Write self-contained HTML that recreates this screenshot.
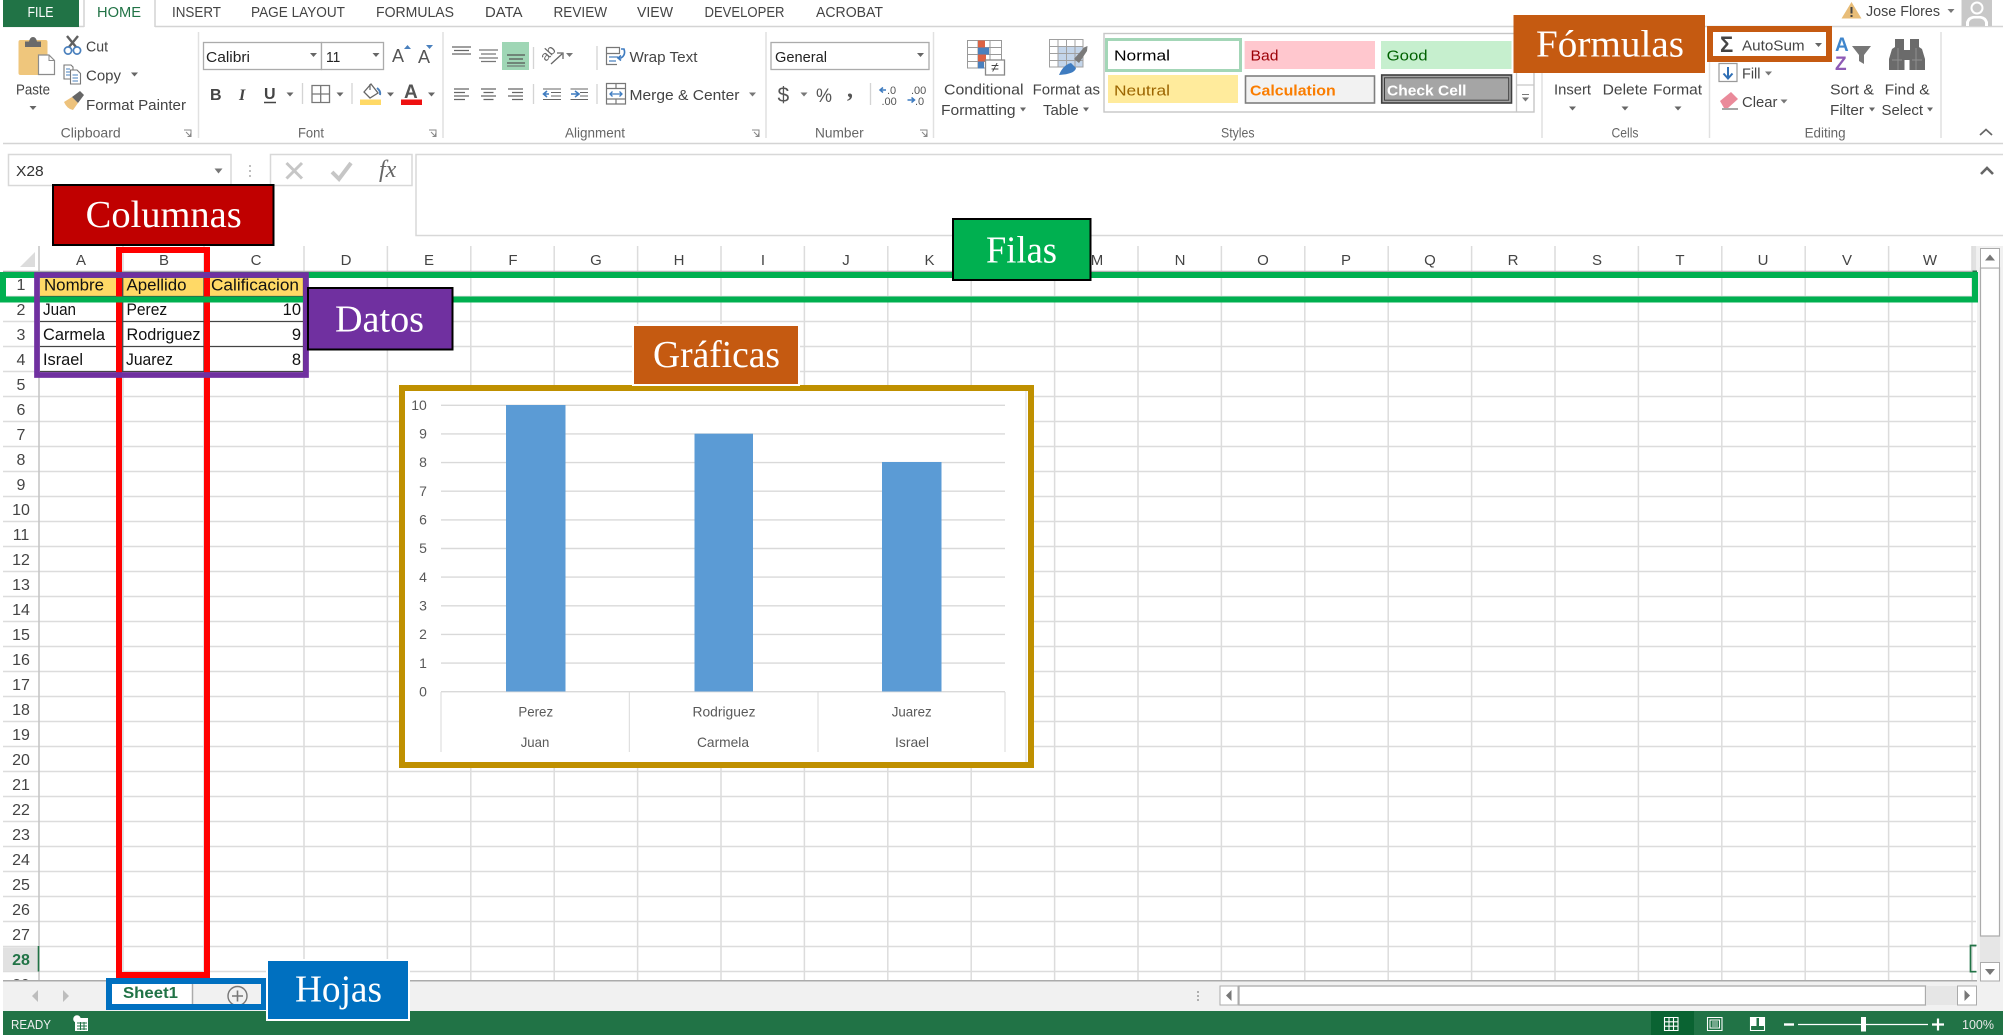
<!DOCTYPE html>
<html lang="es">
<head>
<meta charset="utf-8">
<title>Excel</title>
<style>
html,body{margin:0;padding:0;background:#fff;width:2003px;height:1035px;overflow:hidden}
svg{display:block;position:absolute;left:0;top:0;filter:blur(.3px)}
text{font-family:"Liberation Sans",sans-serif;fill:#444;font-size:15px}
.t{font-size:15px;fill:#444}
.g{font-size:14px;fill:#666}
.tab{font-size:15px;fill:#444}
.s{font-family:"Liberation Serif",serif;font-size:38px;fill:#fff}
.c{font-size:16.5px;fill:#111}
.cr{font-size:16.5px;fill:#111;text-anchor:end}
.rn{font-size:16px;fill:#444;text-anchor:middle}
.cl{font-size:15px;fill:#444;text-anchor:middle}
.ax{font-size:14px;fill:#595959;text-anchor:middle}
.ct{font-size:14px;fill:#595959}
</style>
</head>
<body>
<svg width="2003" height="1035" viewBox="0 0 2003 1035" xmlns="http://www.w3.org/2000/svg">
<rect width="2003" height="1035" fill="#fff"/>

<!-- tabs -->
<path d="M3 26.5H84M155 26.5H2003" stroke="#d4d4d4" stroke-width="1.5" fill="none"/>
<rect x="3" y="0" width="76" height="27" fill="#217346"/>
<path d="M84 27V0M155 27V0" stroke="#d4d4d4" stroke-width="1.5" fill="none"/>
<text x="27.5" y="17" style="fill:#fff;font-size:15px" textLength="26" lengthAdjust="spacingAndGlyphs">FILE</text>
<text x="97" y="17" style="fill:#217346" class="tab" textLength="44" lengthAdjust="spacingAndGlyphs">HOME</text>
<text x="172" y="17" class="tab" textLength="49" lengthAdjust="spacingAndGlyphs">INSERT</text>
<text x="251" y="17" class="tab" textLength="94" lengthAdjust="spacingAndGlyphs">PAGE LAYOUT</text>
<text x="376" y="17" class="tab" textLength="78" lengthAdjust="spacingAndGlyphs">FORMULAS</text>
<text x="485" y="17" class="tab" textLength="37.5" lengthAdjust="spacingAndGlyphs">DATA</text>
<text x="553.5" y="17" class="tab" textLength="53.6" lengthAdjust="spacingAndGlyphs">REVIEW</text>
<text x="637" y="17" class="tab" textLength="36" lengthAdjust="spacingAndGlyphs">VIEW</text>
<text x="704.5" y="17" class="tab" textLength="80" lengthAdjust="spacingAndGlyphs">DEVELOPER</text>
<text x="816" y="17" class="tab" textLength="67" lengthAdjust="spacingAndGlyphs">ACROBAT</text>

<!-- user -->
<path d="M1851.5 2L1861.5 18.5H1841.5Z" fill="#e8bd78"/>
<path d="M1851.5 7V13.5M1851.5 15V17" stroke="#444" stroke-width="2" fill="none"/>
<text x="1866" y="16" class="t" textLength="74" lengthAdjust="spacingAndGlyphs">Jose Flores</text>
<path d="M1947.5 9h7l-3.5 4z" fill="#777"/>
<rect x="1961.5" y="0" width="30.5" height="26" fill="#c8c8c8"/>
<circle cx="1977" cy="8" r="6.5" fill="#fff"/>
<path d="M1966 26V22Q1968 16.5 1973 16H1981Q1986 16.5 1988 22V26Z" fill="#fff"/>
<circle cx="1977" cy="8" r="4.5" fill="#c8c8c8"/>
<path d="M1969 26V22.5Q1970 19 1974 18.5H1980Q1984 19 1985 22.5V26Z" fill="#c8c8c8"/>

<!-- ribbon bottom & seps -->
<path d="M3 143.5H2003" stroke="#d4d4d4" stroke-width="1.5"/>
<path d="M198.5 32V138M443 32V138M766 32V138M933.5 32V138M1542 32V138M1709.5 32V138M1941 32V138" stroke="#e1e1e1" stroke-width="1.5"/>

<!-- clipboard -->
<rect x="18.5" y="40" width="29" height="35" rx="2" fill="#efc67c"/>
<path d="M25 47V41.5H29Q30 37 33 37T37 41.5H41V47Z" fill="#6a6a6a"/>
<path d="M38.5 55H49L54.5 60.5V74.5H38.5Z" fill="#fff" stroke="#8c8c8c" stroke-width="1.2"/>
<path d="M49 55V60.5H54.5" fill="none" stroke="#8c8c8c" stroke-width="1"/>
<text x="16" y="94.5" class="t" textLength="34" lengthAdjust="spacingAndGlyphs">Paste</text>
<path d="M29.5 106h7l-3.5 4z" fill="#666"/>
<path d="M67 36L76 47M78 36L69 47" stroke="#606060" stroke-width="2.4" fill="none"/>
<circle cx="68" cy="50.5" r="3.6" fill="#fff" stroke="#4a80bd" stroke-width="1.7"/>
<circle cx="77" cy="50.5" r="3.6" fill="#fff" stroke="#4a80bd" stroke-width="1.7"/>
<text x="86" y="51.5" class="t" textLength="22" lengthAdjust="spacingAndGlyphs">Cut</text>
<path d="M64 65H71L73 67V79H64Z" fill="#fff" stroke="#777" stroke-width="1.1"/>
<path d="M70.5 70H77L80.5 73.5V84H70.5Z" fill="#fff" stroke="#777" stroke-width="1.1"/>
<path d="M66 69H70M66 72H70M66 75H70M72.5 75H78M72.5 78H78M72.5 81H78" stroke="#4a80bd" stroke-width="1.1"/>
<text x="86" y="80.5" class="t" textLength="35" lengthAdjust="spacingAndGlyphs">Copy</text>
<path d="M131 72.5h7l-3.5 4z" fill="#666"/>
<path d="M64 102L72 97L78 103L73 110Q67 109 64 102Z" fill="#edc27c"/>
<path d="M72 97L80 91L84 95L78 103Z" fill="#666"/>
<text x="86" y="110" class="t" textLength="100" lengthAdjust="spacingAndGlyphs">Format Painter</text>
<text x="60.7" y="137.5" class="g" textLength="60" lengthAdjust="spacingAndGlyphs">Clipboard</text>
<path d="M184 130H191V137M186 132L190 136M187.5 136.5H190.5V133.5" stroke="#888" stroke-width="1" fill="none"/>

<!-- font -->
<rect x="203.5" y="42.5" width="118" height="27" fill="#fff" stroke="#ababab" stroke-width="1.3"/>
<rect x="321.5" y="42.5" width="62" height="27" fill="#fff" stroke="#ababab" stroke-width="1.3"/>
<text x="206" y="62" class="t" style="fill:#222" textLength="44" lengthAdjust="spacingAndGlyphs">Calibri</text>
<text x="326" y="62" class="t" style="fill:#222" textLength="14.3" lengthAdjust="spacingAndGlyphs">11</text>
<path d="M310 53h7l-3.5 4zM372.5 53h7l-3.5 4z" fill="#666"/>
<text x="392" y="62" style="font-size:18px;fill:#555">A</text>
<path d="M404 49h7l-3.5-4z" fill="#4a80bd"/>
<text x="418" y="63" style="font-size:18px;fill:#555">A</text>
<path d="M426 45h7l-3.5 4z" fill="#4a80bd"/>
<text x="210" y="100" style="font-size:16px;font-weight:bold;fill:#444">B</text>
<text x="239" y="100" style="font-size:16px;font-style:italic;font-weight:bold;font-family:'Liberation Serif',serif;fill:#444">I</text>
<text x="264" y="99" style="font-size:16px;font-weight:bold;fill:#444">U</text>
<path d="M264 102.5H276" stroke="#444" stroke-width="1.5"/>
<path d="M286.5 92.5h7l-3.5 4z" fill="#666"/>
<path d="M302.5 83V104" stroke="#d4d4d4" stroke-width="1.3"/>
<path d="M312 85.5H329.5V102.5H312ZM320.7 85.5V102.5M312 94H329.5" stroke="#777" stroke-width="1.3" fill="none"/>
<path d="M336.5 92.5h7l-3.5 4z" fill="#666"/>
<path d="M352 83V104" stroke="#d4d4d4" stroke-width="1.3"/>
<path d="M364 92L371 84L378 93L370 98Z" fill="#fff" stroke="#666" stroke-width="1.3"/>
<path d="M370 84V90" stroke="#666" stroke-width="1.2"/>
<path d="M377 88Q381 91 380 95" stroke="#4a80bd" stroke-width="2" fill="none"/>
<rect x="360" y="99.5" width="21" height="5.5" fill="#ffd966"/>
<path d="M387 92.5h7l-3.5 4z" fill="#666"/>
<text x="404" y="98" style="font-size:19px;font-weight:bold;fill:#555">A</text>
<rect x="401" y="99.5" width="21" height="5.5" fill="#ee1111"/>
<path d="M428 92.5h7l-3.5 4z" fill="#666"/>
<text x="298" y="137.5" class="g" textLength="26" lengthAdjust="spacingAndGlyphs">Font</text>
<path d="M429 130H436V137M431 132L435 136M432.5 136.5H435.5V133.5" stroke="#888" stroke-width="1" fill="none"/>

<!-- alignment -->
<rect x="502" y="42" width="27" height="28" fill="#9fd6b5"/>
<path d="M452 47H471M454 50.5H469M452 54H471" stroke="#666" stroke-width="1.2"/>
<path d="M479 50H498M481 54H496M479 58H498M481 61.5H496" stroke="#777" stroke-width="1.2"/>
<path d="M507 55H525M509 59H523M507 63H525" stroke="#555" stroke-width="1.3"/>
<path d="M507 66H525" stroke="#666" stroke-width="1"/>
<path d="M533.5 47V69M533.5 84V104M597 46V70M597 84V104" stroke="#d4d4d4" stroke-width="1.3"/>
<text transform="translate(546 62) rotate(-48)" style="font-size:14px;fill:#666">ab</text>
<path d="M551 64L562 54M557 53H563V59" stroke="#666" stroke-width="1.3" fill="none"/>
<path d="M566 53h7l-3.5 4z" fill="#777"/>
<path d="M606.5 47.5H619.5V53.5H606.5ZM606.5 53.5V64.5H617" stroke="#777" stroke-width="1.2" fill="none"/>
<path d="M609 57H618M609 61H616" stroke="#4a80bd" stroke-width="1.3"/>
<path d="M621 49H624Q626 55 621 58H618M621 55.5L618 58L621 60.5" stroke="#3f7cc0" stroke-width="1.6" fill="none"/>
<text x="629.5" y="62" class="t" textLength="68" lengthAdjust="spacingAndGlyphs">Wrap Text</text>
<path d="M454 89H469M454 92.5H465M454 96H469M454 99.5H465M481 89H496M483.5 92.5H493.5M481 96H496M483.5 99.5H493.5M508 89H523M512 92.5H523M508 96H523M512 99.5H523" stroke="#666" stroke-width="1.2"/>
<path d="M551 92.5H561M551 96H561M543 99.5H561M543 89H561" stroke="#666" stroke-width="1.1"/>
<path d="M549 94H544M547 91L543.5 94L547 97" stroke="#3f7cc0" stroke-width="1.6" fill="none"/>
<path d="M570.5 89H588M580 92.5H588M580 96H588M570.5 99.5H588" stroke="#666" stroke-width="1.1"/>
<path d="M571 94H578M575 91L579 94L575 97" stroke="#3f7cc0" stroke-width="1.6" fill="none"/>
<path d="M606.5 83.5H625.5V104H606.5ZM606.5 88.5H625.5M606.5 99H625.5M616 83.5V88.5M616 99V104" stroke="#777" stroke-width="1.2" fill="none"/>
<path d="M610 94H622M612.5 91.5L610 94L612.5 96.5M619.5 91.5L622 94L619.5 96.5" stroke="#3f7cc0" stroke-width="1.3" fill="none"/>
<text x="629.5" y="100" class="t" textLength="110" lengthAdjust="spacingAndGlyphs">Merge &amp; Center</text>
<path d="M749 92.5h7l-3.5 4z" fill="#777"/>
<text x="565" y="137.5" class="g" textLength="60" lengthAdjust="spacingAndGlyphs">Alignment</text>
<path d="M752 130H759V137M754 132L758 136M755.5 136.5H758.5V133.5" stroke="#888" stroke-width="1" fill="none"/>

<!-- number -->
<rect x="771" y="42.5" width="158" height="27" fill="#fff" stroke="#ababab" stroke-width="1.3"/>
<text x="775" y="62" class="t" style="fill:#222" textLength="52" lengthAdjust="spacingAndGlyphs">General</text>
<path d="M917 53h7l-3.5 4z" fill="#666"/>
<text x="777.5" y="102" style="font-size:21px;fill:#555">$</text>
<path d="M800.5 92.5h7l-3.5 4z" fill="#777"/>
<text x="816" y="102" style="font-size:19px;fill:#555" textLength="16" lengthAdjust="spacingAndGlyphs">%</text>
<text x="847" y="97" style="font-size:24px;font-weight:bold;fill:#555;font-family:'Liberation Serif',serif">,</text>
<path d="M870.5 83V105" stroke="#d4d4d4" stroke-width="1.3"/>
<path d="M886 90H880M883 87.5L880 90L883 92.5" stroke="#3f7cc0" stroke-width="1.5" fill="none"/>
<text x="887" y="94" style="font-size:11px;fill:#555">.0</text>
<text x="881.5" y="105" style="font-size:11px;fill:#555">.00</text>
<text x="911" y="94" style="font-size:11px;fill:#555">.00</text>
<path d="M907.5 100H914M911.5 97.5L914.5 100L911.5 102.5" stroke="#3f7cc0" stroke-width="1.5" fill="none"/>
<text x="915" y="105" style="font-size:11px;fill:#555">.0</text>
<text x="815" y="137.5" class="g" textLength="48.7" lengthAdjust="spacingAndGlyphs">Number</text>
<path d="M920 130H927V137M922 132L926 136M923.5 136.5H926.5V133.5" stroke="#888" stroke-width="1" fill="none"/>

<!-- conditional formatting -->
<path d="M967.5 40.5H1001.5V68H967.5ZM967.5 47.5H1001.5M967.5 54.5H1001.5M967.5 61.5H1001.5M978 40.5V68M990 40.5V68" stroke="#999" stroke-width="1" fill="#fff"/>
<rect x="978" y="40.5" width="7" height="7" fill="#dc6243"/>
<rect x="978" y="47.5" width="11" height="7" fill="#4a80bd"/>
<rect x="978" y="54.5" width="8" height="7" fill="#dc6243"/>
<rect x="978" y="61.5" width="6" height="7" fill="#4a80bd"/>
<rect x="985.5" y="60" width="19" height="15" fill="#fff" stroke="#888" stroke-width="1.3"/>
<text x="995" y="72" style="font-size:14px;fill:#444;text-anchor:middle">≠</text>
<text x="944" y="94.5" class="t" textLength="79.5" lengthAdjust="spacingAndGlyphs">Conditional</text>
<text x="941" y="115" class="t" textLength="74.6" lengthAdjust="spacingAndGlyphs">Formatting</text>
<path d="M1020 107.5h6l-3 4z" fill="#666"/>
<!-- format as table -->
<rect x="1058" y="46" width="25" height="21" fill="#c3d5ea"/>
<path d="M1049.5 39.5H1083V67H1049.5ZM1049.5 46.5H1083M1049.5 53.5H1083M1049.5 60.5H1083M1058 39.5V67M1066.5 39.5V67M1075 39.5V67" stroke="#a0a0a0" stroke-width="1" fill="none"/>
<path d="M1074 59L1084 47.5L1087.5 46L1087 51L1079 63Z" fill="#7a7a7a"/>
<path d="M1059 75Q1063 65 1071 63L1076 68Q1075 74 1059 75Z" fill="#3f7cc0"/>
<text x="1032.6" y="94.5" class="t" textLength="67.4" lengthAdjust="spacingAndGlyphs">Format as</text>
<text x="1043" y="115" class="t" textLength="35.7" lengthAdjust="spacingAndGlyphs">Table</text>
<path d="M1083 107.5h6l-3 4z" fill="#666"/>

<!-- styles -->
<rect x="1104" y="33.5" width="430" height="78.5" fill="#fff" stroke="#c6c6c6" stroke-width="1.4"/>
<rect x="1106.5" y="39.5" width="134" height="31" fill="#fff" stroke="#a3d6b7" stroke-width="3"/>
<rect x="1244.6" y="41" width="130.4" height="28" fill="#ffc7ce"/>
<rect x="1381" y="41" width="130.5" height="28" fill="#c6efce"/>
<rect x="1108" y="75" width="130" height="28" fill="#ffeb9c"/>
<rect x="1245.5" y="76" width="129" height="27" fill="#f2f2f2" stroke="#7f7f7f" stroke-width="1.6"/>
<rect x="1381.7" y="75" width="129.8" height="28" fill="#a5a5a5" stroke="#3f3f3f" stroke-width="1.6"/>
<rect x="1384.5" y="77.8" width="124.2" height="22.4" fill="none" stroke="#3f3f3f" stroke-width="1"/>
<text x="1114" y="60.7" class="t" style="fill:#000" textLength="56" lengthAdjust="spacingAndGlyphs">Normal</text>
<text x="1250.5" y="60.7" class="t" style="fill:#9c0006" textLength="28" lengthAdjust="spacingAndGlyphs">Bad</text>
<text x="1386.6" y="60.7" class="t" style="fill:#006100" textLength="41" lengthAdjust="spacingAndGlyphs">Good</text>
<text x="1114" y="95.3" class="t" style="fill:#9c6500" textLength="56" lengthAdjust="spacingAndGlyphs">Neutral</text>
<text x="1250" y="95.3" class="t" style="fill:#fa7d00;font-weight:bold" textLength="85.7" lengthAdjust="spacingAndGlyphs">Calculation</text>
<text x="1387" y="95.3" class="t" style="fill:#fff;font-weight:bold" textLength="79.5" lengthAdjust="spacingAndGlyphs">Check Cell</text>
<path d="M1516.5 85H1534M1516.5 33.5V112" stroke="#c6c6c6" stroke-width="1.3" fill="none"/>
<path d="M1522 94.5H1529" stroke="#777" stroke-width="1"/>
<path d="M1522 97.5h7l-3.5 4z" fill="#777"/>
<text x="1221" y="137.5" class="g" textLength="33.5" lengthAdjust="spacingAndGlyphs">Styles</text>

<!-- cells -->
<text x="1554" y="94.5" class="t" textLength="37" lengthAdjust="spacingAndGlyphs">Insert</text>
<text x="1602.7" y="94.5" class="t" textLength="45" lengthAdjust="spacingAndGlyphs">Delete</text>
<text x="1653" y="94.5" class="t" textLength="49" lengthAdjust="spacingAndGlyphs">Format</text>
<path d="M1569 106.5h7l-3.5 4zM1621.5 106.5h7l-3.5 4zM1674.5 106.5h7l-3.5 4z" fill="#666"/>
<text x="1611.5" y="137.5" class="g" textLength="27" lengthAdjust="spacingAndGlyphs">Cells</text>

<!-- editing -->
<path d="M1719 63.5H1737V81.5H1719Z" fill="#fff" stroke="#999" stroke-width="1.2"/>
<path d="M1728 67V78M1723.5 73.5L1728 78.5L1732.5 73.5" stroke="#2f6fb5" stroke-width="2" fill="none"/>
<text x="1742" y="78.5" class="t" textLength="18.5" lengthAdjust="spacingAndGlyphs">Fill</text>
<path d="M1765 71.5h7l-3.5 4z" fill="#777"/>
<path d="M1720 101L1731 92L1738 99L1728 108H1724Z" fill="#ea8a9a"/>
<path d="M1722 109H1738" stroke="#777" stroke-width="1.3"/>
<text x="1742" y="107" class="t" textLength="35.4" lengthAdjust="spacingAndGlyphs">Clear</text>
<path d="M1780.5 99.5h7l-3.5 4z" fill="#777"/>
<text x="1835" y="51" style="font-size:19px;font-weight:bold;fill:#3f86cc">A</text>
<text x="1835" y="70" style="font-size:19px;font-weight:bold;fill:#8e5ab5">Z</text>
<path d="M1852 46H1871L1864 55V64L1859 61V55Z" fill="#777"/>
<text x="1830" y="94.5" class="t" textLength="44" lengthAdjust="spacingAndGlyphs">Sort &amp;</text>
<text x="1830" y="115" class="t" textLength="34" lengthAdjust="spacingAndGlyphs">Filter</text>
<path d="M1869 107.5h6l-3 4z" fill="#666"/>
<path d="M1895 39H1904V50H1910V39H1919V47L1922 49L1925 59V70H1909.5V60H1904.5V70H1889V59L1892 49L1895 47Z" fill="#6b6b6b"/>
<path d="M1898 48V70M1916 48V70M1892 60H1902M1912 60H1922" stroke="#8f8f8f" stroke-width="1"/>
<path d="M1889 56V50" stroke="#fff" stroke-width="0"/>
<text x="1884.6" y="94.5" class="t" textLength="45" lengthAdjust="spacingAndGlyphs">Find &amp;</text>
<text x="1881.5" y="115" class="t" textLength="41.5" lengthAdjust="spacingAndGlyphs">Select</text>
<path d="M1927 107.5h6l-3 4z" fill="#666"/>
<text x="1804.6" y="137.5" class="g" textLength="41" lengthAdjust="spacingAndGlyphs">Editing</text>
<path d="M1980 135L1986 129.5L1992 135" stroke="#666" stroke-width="1.7" fill="none"/>

<!-- formula bar -->
<rect x="8.5" y="154.5" width="222.5" height="31" fill="#fff" stroke="#d8d8d8" stroke-width="1.5"/>
<text x="16" y="176" class="t" style="fill:#333" textLength="27.7" lengthAdjust="spacingAndGlyphs">X28</text>
<path d="M214.5 168.5h8l-4 5z" fill="#777"/>
<path d="M250 165v2M250 170v2M250 175v2" stroke="#aaa" stroke-width="1.5"/>
<rect x="270.5" y="154.5" width="141.5" height="31" fill="#fff" stroke="#d8d8d8" stroke-width="1.5"/>
<path d="M286.5 163L302 178.5M302 163L286.5 178.5" stroke="#c6c6c6" stroke-width="3"/>
<path d="M332 172L339 179L351 163" stroke="#c6c6c6" stroke-width="4" fill="none"/>
<text x="379" y="177" style="font-family:'Liberation Serif',serif;font-style:italic;font-size:24px;fill:#666">fx</text>
<rect x="416" y="154.5" width="1600" height="81" fill="#fff" stroke="#d8d8d8" stroke-width="1.5"/>
<path d="M1981 174L1987 168L1993 174" stroke="#666" stroke-width="2.6" fill="none"/>

<!-- grid -->
<path d="M3 296.5H1976M3 321.5H1976M3 346.5H1976M3 371.5H1976M3 396.5H1976M3 421.5H1976M3 446.5H1976M3 471.5H1976M3 496.5H1976M3 521.5H1976M3 546.5H1976M3 571.5H1976M3 596.5H1976M3 621.5H1976M3 646.5H1976M3 671.5H1976M3 696.5H1976M3 721.5H1976M3 746.5H1976M3 771.5H1976M3 796.5H1976M3 821.5H1976M3 846.5H1976M3 871.5H1976M3 896.5H1976M3 921.5H1976M3 946.5H1976M3 971.5H1976" stroke="#dcdcdc" stroke-width="1.5" fill="none"/>
<path d="M123 246V981M204 246V981M304 246V981M387.4 246V981M470.8 246V981M554.2 246V981M637.6 246V981M721 246V981M804.4 246V981M887.8 246V981M971.2 246V981M1054.6 246V981M1138 246V981M1221.4 246V981M1304.8 246V981M1388.2 246V981M1471.6 246V981M1555 246V981M1638.4 246V981M1721.8 246V981M1805.2 246V981M1888.6 246V981M1972 246V981" stroke="#dcdcdc" stroke-width="1.5" fill="none"/>
<path d="M39 246V981" stroke="#c4c4c4" stroke-width="1.5"/>
<path d="M3 271.5H1976" stroke="#b0b0b0" stroke-width="1.5"/>
<path d="M20 267H35V252Z" fill="#dcdcdc"/>
<rect x="1972.5" y="246" width="4" height="25" fill="#e1e1e1"/>
<path d="M1972.5 271.5H1977" stroke="#217346" stroke-width="2"/>
<rect x="3" y="947.5" width="35" height="23.5" fill="#e1e1e1"/>
<path d="M38.5 946V971.5" stroke="#217346" stroke-width="1.6"/>
<path d="M1976.5 945.5H1970.5V971.7H1976.5" stroke="#217346" stroke-width="1.7" fill="none"/>

<!-- col letters -->
<text x="81" y="265" class="cl">A</text><text x="164" y="265" class="cl">B</text><text x="256" y="265" class="cl">C</text><text x="346" y="265" class="cl">D</text><text x="429" y="265" class="cl">E</text><text x="513" y="265" class="cl">F</text><text x="596" y="265" class="cl">G</text><text x="679" y="265" class="cl">H</text><text x="763" y="265" class="cl">I</text><text x="846" y="265" class="cl">J</text><text x="929.5" y="265" class="cl">K</text><text x="1013" y="265" class="cl">L</text><text x="1097" y="265" class="cl">M</text><text x="1180" y="265" class="cl">N</text><text x="1263" y="265" class="cl">O</text><text x="1346" y="265" class="cl">P</text><text x="1430" y="265" class="cl">Q</text><text x="1513" y="265" class="cl">R</text><text x="1597" y="265" class="cl">S</text><text x="1680" y="265" class="cl">T</text><text x="1763" y="265" class="cl">U</text><text x="1847" y="265" class="cl">V</text><text x="1930" y="265" class="cl">W</text>

<!-- row numbers -->
<text x="21" y="290" class="rn">1</text><text x="21" y="315" class="rn">2</text><text x="21" y="340" class="rn">3</text><text x="21" y="365" class="rn">4</text><text x="21" y="390" class="rn">5</text><text x="21" y="415" class="rn">6</text><text x="21" y="440" class="rn">7</text><text x="21" y="465" class="rn">8</text><text x="21" y="490" class="rn">9</text><text x="21" y="515" class="rn">10</text><text x="21" y="540" class="rn">11</text><text x="21" y="565" class="rn">12</text><text x="21" y="590" class="rn">13</text><text x="21" y="615" class="rn">14</text><text x="21" y="640" class="rn">15</text><text x="21" y="665" class="rn">16</text><text x="21" y="690" class="rn">17</text><text x="21" y="715" class="rn">18</text><text x="21" y="740" class="rn">19</text><text x="21" y="765" class="rn">20</text><text x="21" y="790" class="rn">21</text><text x="21" y="815" class="rn">22</text><text x="21" y="840" class="rn">23</text><text x="21" y="865" class="rn">24</text><text x="21" y="890" class="rn">25</text><text x="21" y="915" class="rn">26</text><text x="21" y="940" class="rn">27</text><text x="21" y="965" class="rn" style="font-weight:bold;fill:#217346">28</text><text x="21" y="990" class="rn">29</text>

<!-- data table -->
<rect x="40" y="272.5" width="263.5" height="23.5" fill="#ffd966"/>
<rect x="40" y="297" width="263.5" height="74" fill="#fff"/>
<path d="M40 296.5H303.5M40 321.5H303.5M40 346.5H303.5M40 371.5H303.5M122.7 273V371.5M204 273V371.5M303.5 273V371.5" stroke="#444" stroke-width="1.3" fill="none"/>
<text x="44" y="290.5" class="c" textLength="60" lengthAdjust="spacingAndGlyphs">Nombre</text>
<text x="126.5" y="290.5" class="c" textLength="60" lengthAdjust="spacingAndGlyphs">Apellido</text>
<text x="211" y="290.5" class="c" textLength="88" lengthAdjust="spacingAndGlyphs">Calificacion</text>
<text x="43" y="315" class="c" textLength="33" lengthAdjust="spacingAndGlyphs">Juan</text>
<text x="126.5" y="315" class="c" textLength="40.7" lengthAdjust="spacingAndGlyphs">Perez</text>
<text x="301" y="315" class="cr">10</text>
<text x="43" y="340" class="c" textLength="62" lengthAdjust="spacingAndGlyphs">Carmela</text>
<text x="126.5" y="340" class="c" textLength="74" lengthAdjust="spacingAndGlyphs">Rodriguez</text>
<text x="301" y="340" class="cr">9</text>
<text x="43" y="365" class="c" textLength="40" lengthAdjust="spacingAndGlyphs">Israel</text>
<text x="126" y="365" class="c" textLength="47" lengthAdjust="spacingAndGlyphs">Juarez</text>
<text x="301" y="365" class="cr">8</text>

<!-- chart -->
<rect x="402" y="388" width="629" height="377" fill="#fff"/>
<path d="M1026 391V762" stroke="#d8d8d8" stroke-width="1"/>
<path d="M441 405.3H1005M441 433.9H1005M441 462.6H1005M441 491.2H1005M441 519.9H1005M441 548.5H1005M441 577.1H1005M441 605.8H1005M441 634.4H1005M441 663.1H1005M441 691.7H1005" stroke="#d9d9d9" stroke-width="1.4" fill="none"/>
<rect x="506" y="405" width="59.5" height="286.5" fill="#5b9bd5"/>
<rect x="694.5" y="433.7" width="58.5" height="257.8" fill="#5b9bd5"/>
<rect x="882" y="462" width="59.5" height="229.5" fill="#5b9bd5"/>
<path d="M441 692V752M629.3 692V752M818 692V752M1005 692V752" stroke="#d9d9d9" stroke-width="1" fill="none"/>
<text x="419" y="410" class="ax">10</text><text x="423" y="438.5" class="ax">9</text><text x="423" y="467" class="ax">8</text><text x="423" y="496" class="ax">7</text><text x="423" y="524.5" class="ax">6</text><text x="423" y="553" class="ax">5</text><text x="423" y="582" class="ax">4</text><text x="423" y="610.5" class="ax">3</text><text x="423" y="639" class="ax">2</text><text x="423" y="668" class="ax">1</text><text x="423" y="696.5" class="ax">0</text>
<text x="518.4" y="716.7" class="ct" textLength="34.7" lengthAdjust="spacingAndGlyphs">Perez</text>
<text x="692.5" y="716.7" class="ct" textLength="63" lengthAdjust="spacingAndGlyphs">Rodriguez</text>
<text x="891.7" y="716.7" class="ct" textLength="40" lengthAdjust="spacingAndGlyphs">Juarez</text>
<text x="520.7" y="747" class="ct" textLength="28.6" lengthAdjust="spacingAndGlyphs">Juan</text>
<text x="697" y="747" class="ct" textLength="52" lengthAdjust="spacingAndGlyphs">Carmela</text>
<text x="895" y="747" class="ct" textLength="34" lengthAdjust="spacingAndGlyphs">Israel</text>
<rect x="402" y="388" width="629" height="377" fill="none" stroke="#bf9000" stroke-width="6"/>

<!-- scrollbars / tab bar -->
<rect x="3" y="981" width="2000" height="30" fill="#f1f1f1"/>
<path d="M3 980.7H1977" stroke="#ababab" stroke-width="1.5"/>
<rect x="1977" y="246" width="26" height="735" fill="#f1f1f1"/>
<rect x="1980" y="268" width="20" height="694" fill="#e6e6e6"/>
<rect x="1980.5" y="268" width="19" height="668" fill="#fff" stroke="#ababab" stroke-width="1.2"/>
<rect x="1980.5" y="248.5" width="19" height="19.5" fill="#fff" stroke="#ababab" stroke-width="1"/>
<path d="M1985 260.5h10l-5-6z" fill="#777"/>
<rect x="1980.5" y="962.5" width="19" height="18.5" fill="#fff" stroke="#ababab" stroke-width="1"/>
<path d="M1985 969h10l-5 6z" fill="#777"/>
<path d="M38 990V1002L32 996ZM63 990V1002L69 996Z" fill="#bdbdbd"/>
<path d="M1198 991v2M1198 995v2M1198 999v2" stroke="#999" stroke-width="1.5"/>
<rect x="1220" y="986" width="18" height="19" fill="#fff" stroke="#ababab" stroke-width="1"/>
<path d="M1231.5 990V1001L1226 995.5Z" fill="#777"/>
<rect x="1239" y="986" width="686.5" height="19" fill="#fff" stroke="#ababab" stroke-width="1.3"/>
<rect x="1926" y="986" width="31" height="19" fill="#e6e6e6"/>
<rect x="1957.5" y="986" width="19" height="19" fill="#fff" stroke="#ababab" stroke-width="1"/>
<path d="M1964.5 990V1001L1970 995.5Z" fill="#777"/>

<!-- sheet tab -->
<rect x="112" y="984" width="150" height="20" fill="#f1f1f1"/>
<rect x="112" y="984" width="80" height="20" fill="#fff"/>
<path d="M192.5 984V1004" stroke="#ababab" stroke-width="1.5"/>
<text x="123" y="998" style="font-size:16px;font-weight:bold;fill:#217346" textLength="55" lengthAdjust="spacingAndGlyphs">Sheet1</text>
<circle cx="237.5" cy="996" r="9.5" fill="none" stroke="#777" stroke-width="1.4"/>
<path d="M232 996H243M237.5 990.5V1001.5" stroke="#777" stroke-width="1.6"/>
<rect x="109" y="981" width="155" height="26" fill="none" stroke="#0070c0" stroke-width="6"/>

<!-- status bar -->
<rect x="3" y="1011" width="2000" height="24" fill="#217346"/>
<text x="11" y="1029" style="font-size:13px;fill:#f0f0f0" textLength="40" lengthAdjust="spacingAndGlyphs">READY</text>
<rect x="75" y="1018" width="13" height="13" fill="#fff"/>
<circle cx="77" cy="1019" r="3.8" fill="#fff"/>
<path d="M77 1023H87M77 1026H87M77 1029H87M80.5 1022V1030M84 1022V1030" stroke="#217346" stroke-width="1"/>
<rect x="1651" y="1011" width="43" height="24" fill="#0a6332"/>
<path d="M1664.5 1017.5H1678V1030.5H1664.5ZM1664.5 1021.8H1678M1664.5 1026.2H1678M1669 1017.5V1030.5M1673.5 1017.5V1030.5" stroke="#fff" stroke-width="1.1" fill="none"/>
<path d="M1707.5 1017.5H1722V1030.5H1707.5Z" stroke="#fff" stroke-width="1.1" fill="none"/>
<rect x="1710" y="1020" width="9.5" height="8" fill="none" stroke="#fff" stroke-width="1"/>
<path d="M1712 1022H1718M1712 1024H1718M1712 1026H1718" stroke="#fff" stroke-width="0.8"/>
<path d="M1750.5 1017.5H1764.5V1030.5H1750.5Z" stroke="#fff" stroke-width="1.1" fill="none"/>
<rect x="1751" y="1018" width="5.5" height="8" fill="#fff"/>
<rect x="1759" y="1018" width="5" height="8" fill="#fff"/>
<path d="M1784 1024.5H1794" stroke="#fff" stroke-width="2.4"/>
<path d="M1798 1024.5H1928" stroke="#fff" stroke-width="1.3"/>
<rect x="1861" y="1017" width="5" height="14.5" fill="#fff"/>
<path d="M1932 1024.5H1944M1938 1018.5V1030.5" stroke="#fff" stroke-width="2.2"/>
<text x="1962" y="1029" style="font-size:13px;fill:#e8e8e8" textLength="32" lengthAdjust="spacingAndGlyphs">100%</text>

<!-- annotation boxes -->
<rect x="119" y="250" width="88" height="725" fill="none" stroke="#ff0000" stroke-width="6"/>
<rect x="3" y="275" width="1972" height="24.5" fill="none" stroke="#00b050" stroke-width="6"/>
<rect x="37" y="275" width="269" height="100" fill="none" stroke="#7030a0" stroke-width="5.7"/>

<rect x="53" y="185" width="220.5" height="60" fill="#c00000" stroke="#000" stroke-width="2"/>
<text x="85.7" y="227" class="s" textLength="156" lengthAdjust="spacingAndGlyphs">Columnas</text>
<rect x="308" y="288" width="144.5" height="61.5" fill="#7030a0" stroke="#000" stroke-width="2"/>
<text x="335" y="331.7" class="s" textLength="89" lengthAdjust="spacingAndGlyphs">Datos</text>
<rect x="953" y="219" width="137.5" height="61" fill="#00b050" stroke="#000" stroke-width="2"/>
<text x="986" y="262.7" class="s" textLength="71" lengthAdjust="spacingAndGlyphs">Filas</text>
<rect x="633" y="325" width="166" height="60" fill="#c55a11" stroke="#fff" stroke-width="2"/>
<text x="653" y="367" class="s" textLength="127" lengthAdjust="spacingAndGlyphs">Gráficas</text>
<rect x="1513.5" y="15" width="191.5" height="58" fill="#c55a11"/>
<text x="1536" y="56.7" class="s" textLength="148" lengthAdjust="spacingAndGlyphs">Fórmulas</text>
<rect x="1710" y="29" width="119" height="30" fill="#fff" stroke="#c55a11" stroke-width="6"/>
<text x="1720" y="52" style="font-size:22px;fill:#444;font-weight:bold">Σ</text>
<text x="1742" y="50.3" class="t" textLength="62.6" lengthAdjust="spacingAndGlyphs">AutoSum</text>
<path d="M1815 43h7l-3.5 4z" fill="#666"/>
<rect x="267" y="960" width="142" height="60" fill="#0070c0" stroke="#fff" stroke-width="2"/>
<text x="295" y="1001.7" class="s" textLength="87" lengthAdjust="spacingAndGlyphs">Hojas</text>
</svg>
</body>
</html>
